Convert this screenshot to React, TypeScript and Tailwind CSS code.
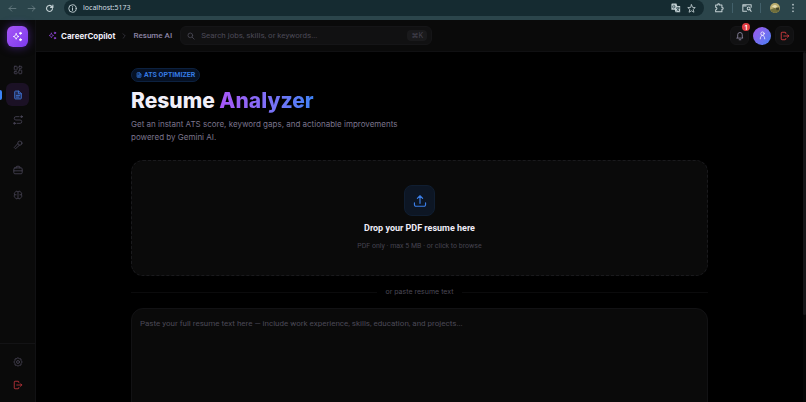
import type { ReactNode } from "react";

function Icon({ size = 10, width = 2, className = "", children }: { size?: number; width?: number; className?: string; children: ReactNode }) {
  return (
    <svg width={size} height={size} viewBox="0 0 24 24" fill="none" stroke="currentColor" strokeWidth={width} strokeLinecap="round" strokeLinejoin="round" className={`shrink-0 ${className}`} aria-hidden="true">
      {children}
    </svg>
  );
}

const sparkles = (
  <>
    <path d="M9 6c1.200 4 2.200 5 6 6-3.800 1-4.800 2-6 6-1.200-4-2.200-5-6-6 3.800-1 4.800-2 6-6Z" />
    <circle cx="18.500" cy="5" r="2" fill="currentColor" />
    <circle cx="18.500" cy="19" r="2" fill="currentColor" />
  </>
);
const logout = (
  <>
    <path d="M14 6V5a2 2 0 0 0-2-2H5a2 2 0 0 0-2 2v14a2 2 0 0 0 2 2h7a2 2 0 0 0 2-2v-1" />
    <path d="M9 12h12M18 9l3 3-3 3" />
  </>
);
const doc = (
  <>
    <path d="M13 2.500H6a2 2 0 0 0-2 2v15a2 2 0 0 0 2 2h12a2 2 0 0 0 2-2v-10z" fill="currentColor" fillOpacity="0.25" />
    <path d="M13 2.500V9h7M8 13h8M8 17h6" />
  </>
);

const nav: { label: string; active?: boolean; icon: ReactNode }[] = [
  {
    label: "Dashboard",
    icon: (
      <>
        <rect x="3" y="3" width="7" height="9" rx="1.500" />
        <rect x="14" y="3" width="7" height="5" rx="1.500" />
        <rect x="14" y="12" width="7" height="9" rx="1.500" />
        <rect x="3" y="16" width="7" height="5" rx="1.500" />
      </>
    ),
  },
  { label: "Resume AI", active: true, icon: doc },
  {
    label: "Roadmap",
    icon: (
      <>
        <circle cx="20.500" cy="4" r="2" fill="currentColor" />
        <circle cx="3.500" cy="20" r="2" fill="currentColor" />
        <path d="M14.500 4H7a4 4 0 0 0 0 8h10a4 4 0 0 1 0 8H9.500" />
      </>
    ),
  },
  {
    label: "Interview",
    icon: (
      <>
        <circle cx="16.500" cy="7.500" r="5" />
        <path d="M11.500 8.500 3 18l3 3 9.500-8.500" />
      </>
    ),
  },
  {
    label: "Jobs",
    icon: (
      <>
        <rect x="2" y="7" width="20" height="14" rx="2.500" />
        <path d="M7.500 7V5a2 2 0 0 1 2-2h5a2 2 0 0 1 2 2v2M2 14h20" />
      </>
    ),
  },
  {
    label: "Skills",
    icon: (
      <>
        <path d="M12 4.500C12 2.500 7 1.500 6 5 3 6 2.500 9 4 11.500 2 14 3 18 6 19c1 3.500 6 2.500 6 .500zM12 4.500c0-2 5-3 6 .500 3 1 3.500 4 2 6.500 2 2.500 1 6.500-2 7.500-1 3.500-6 2.500-6 .500" />
        <path d="M4 11.500h3.500M20 11.500h-3.500" />
      </>
    ),
  },
];

function BrowserBar() {
  return (
    <div className="flex h-5 shrink-0 items-start bg-[#2b454b] text-[#c3d0d3]">
      <div className="flex h-4 w-16 items-center justify-between pl-2 pr-2.5">
        <button aria-label="Back" className="text-[#71868b]"><Icon size={9}><path d="M21 12H3M10 5l-7 7 7 7" /></Icon></button>
        <button aria-label="Forward" className="text-[#71868b]"><Icon size={9}><path d="M3 12h18M14 5l7 7-7 7" /></Icon></button>
        <button aria-label="Reload"><Icon size={9} width={3}><path d="M20 12a8 8 0 1 1-2.500-6L21 9M21 3v6h-6" /></Icon></button>
      </div>
      <div className="flex h-4 flex-1 items-center gap-1.5 rounded-full bg-[#152b31] pl-1 pr-2">
        <button aria-label="Site information"><Icon size={9} width={2.5}><circle cx="12" cy="12" r="10" /><path d="M12 11v6M12 7v1" /></Icon></button>
        <input aria-label="Address" readOnly value="localhost:5173" className="min-w-0 flex-1 bg-transparent font-['Noto_Sans',sans-serif] text-[7px] leading-4 text-[#d3dee0] outline-none" />
        <button aria-label="Translate">
          <Icon size={10} width={2}>
            <path d="M3 1h10l2 6h7v15H11l-2-6H1V3a2 2 0 0 1 2-2Z" fill="#c3d0d3" stroke="none" />
            <path d="M9.500 6.500C8 4 3.500 5 3.500 9s5.500 4.500 6.500 0H7M13 12h7M16.500 10v2M19 12c-1 4-3 6-5 7M14 14l5 5" stroke="#314b52" />
          </Icon>
        </button>
        <button aria-label="Bookmark"><Icon size={9} width={2.2}><path d="m12 2 3 7 7 .5-5.500 4.800L18.500 22 12 18l-6.500 4 2-7.700L2 9.500 9 9z" /></Icon></button>
      </div>
      <div className="flex h-4 w-[102px] shrink-0 items-center justify-between pl-2.5 pr-2">
        <button aria-label="Extensions"><Icon size={10} width={2.5}><path d="M4 5h5V4a2 2 0 0 1 4 0v1h6v6h1a2 2 0 0 1 0 4h-1v6H4v-5a3 3 0 0 0 0-6z" /></Icon></button>
        <span className="h-2.5 w-px bg-[#42606a]" />
        <button aria-label="Side search"><Icon size={10} width={2.5}><path d="M11 20H2V4h20v6M2 7h8" /><circle cx="16" cy="13" r="3.500" /><path d="m19 16 3 4" /></Icon></button>
        <span className="h-2.5 w-px bg-[#42606a]" />
        <button aria-label="Profile" className="h-2.5 w-2.5 overflow-hidden rounded-full">
          <svg width="10" height="10" viewBox="0 0 12 12" className="block" aria-hidden="true">
            <rect width="12" height="12" fill="#b9ac6d" /><path d="M0 8l5-2 7 2v4H0z" fill="#706f3c" /><path d="M2 4l4-2 3 2-3 2z" fill="#e5dcae" /><path d="M7 6l4-1v3l-3 1z" fill="#44452b" />
          </svg>
        </button>
        <button aria-label="Browser menu"><Icon size={10}><g fill="currentColor" stroke="none"><circle cx="12" cy="4" r="2" /><circle cx="12" cy="12" r="2" /><circle cx="12" cy="20" r="2" /></g></Icon></button>
      </div>
    </div>
  );
}

function Sidebar() {
  return (
    <aside className="flex w-9 shrink-0 flex-col border-r border-[#111113] bg-[#0a0a0a]">
      <div className="flex justify-center pt-1.5">
        <a href="#home" aria-label="CareerCopilot home" className="flex h-[21px] w-[21px] items-center justify-center rounded-md bg-linear-to-br from-[#a855f7] to-[#7c3aed] text-white shadow-[0_0_10px_#7c3aed80]">
          <Icon size={11}>{sparkles}</Icon>
        </a>
      </div>
      <nav className="mt-[11px] flex flex-1 flex-col gap-0.5">
        {nav.map((item) => (
          <div key={item.label} className="flex items-center">
            <span className={item.active ? "h-2.5 w-0.5 rounded-r-full bg-[#3b82f6]" : "h-2.5 w-0.5"} />
            <a href={`#${item.label}`} aria-label={item.label} className={item.active ? "ml-1 flex h-[23px] w-[23px] items-center justify-center rounded-md bg-[#1b1125] text-[#4079dc]" : "ml-1 flex h-[23px] w-[23px] items-center justify-center text-[#484556]"}>
              <Icon size={10}>{item.icon}</Icon>
            </a>
          </div>
        ))}
      </nav>
      <div className="flex flex-col items-center border-t border-[#131315] py-1.5">
        <button aria-label="Settings" className="flex h-[23px] items-center text-[#484556]">
          <Icon size={10}><path d="m12 2 3 2 4 .5.500 4L22 12l-2.500 3.500-.5 4-4 .5-3 2-3-2-4-.5-.5-4L2 12l2.500-3.500.5-4L9 4z" /><circle cx="12" cy="12" r="3.500" /></Icon>
        </button>
        <button aria-label="Log out" className="flex h-[23px] items-center text-[#c5363d]"><Icon size={10}>{logout}</Icon></button>
      </div>
    </aside>
  );
}

function Header() {
  return (
    <header className="flex h-8 shrink-0 items-center border-b border-[#101012] bg-[#0a0a0a] px-3">
      <a href="#home" className="flex items-center gap-1 text-[8px] font-bold leading-4 text-[#f0eef8]">
        <Icon size={9} className="text-[#8a43cf]">{sparkles}</Icon>
        CareerCopilot
      </a>
      <Icon size={6} width={2.5} className="mx-1.5 text-[#454350]"><path d="m8 3 9 9-9 9" /></Icon>
      <span className="font-['Roboto',sans-serif] text-[8px] font-medium leading-4 text-[#8d85a6]">Resume AI</span>
      <label className="ml-2 flex h-[19px] w-[252px] items-center gap-1.5 rounded-md border border-[#151517] bg-[#111112] pl-1.5 pr-1 text-[#4b4956]">
        <Icon size={8} width={2.5}><circle cx="10" cy="10" r="7" /><path d="m15.500 15.500 6 6" /></Icon>
        <input aria-label="Search" placeholder="Search jobs, skills, or keywords..." className="min-w-0 flex-1 bg-transparent font-['Roboto',sans-serif] text-[8px] outline-none placeholder:text-[#4b4956]" />
        <kbd className="rounded-sm bg-[#1a1a1c] px-1 font-['Inter','DejaVu_Sans',sans-serif] text-[7px] leading-[11px] text-[#454350]">⌘K</kbd>
      </label>
      <div className="ml-auto flex items-center gap-1">
        <button aria-label="Notifications, 1 unread" className="relative flex h-[19px] w-[19px] items-center justify-center rounded-md border border-[#151517] bg-[#111112] text-[#928ba7]">
          <Icon size={10}><path d="M5 17h14l-1.500-2.500V9a5.500 5.500 0 0 0-11 0v5.500zM10 21h4" /></Icon>
          <span className="absolute -right-0.5 -top-1 flex h-2 w-2 items-center justify-center rounded-full bg-[#e23e42] text-[6px] font-bold text-white">1</span>
        </button>
        <button aria-label="Account" className="flex h-[18px] w-[18px] items-center justify-center rounded-full bg-linear-to-br from-[#9c55ee] to-[#3b7ff3] text-white">
          <Icon size={9}><circle cx="12" cy="7" r="4.500" /><path d="M6 21c0-6 3-9 6-9s6 3 6 9" /></Icon>
        </button>
        <button aria-label="Sign out" className="flex h-[19px] w-[19px] items-center justify-center rounded-md border border-[#151517] bg-[#111112] text-[#e23e42]"><Icon size={10}>{logout}</Icon></button>
      </div>
    </header>
  );
}

export default function App() {
  return (
    <div className="flex h-screen flex-col overflow-hidden bg-black font-['Inter',sans-serif]">
      <BrowserBar />
      <div className="flex min-h-0 flex-1">
        <Sidebar />
        <div className="flex min-w-0 flex-1 flex-col">
          <Header />
          <div className="flex min-h-0 flex-1 justify-between">
            <main className="min-w-0 flex-1 overflow-hidden px-[95px] pt-4">
              <div className="flex">
                <span className="flex h-3.5 items-center gap-0.5 rounded-full border border-[#0c2140] bg-[#061124] px-1 font-['Roboto',sans-serif] text-[7px] font-bold text-[#357be3]">
                  <Icon size={6} width={2.5}>{doc}</Icon>
                  ATS OPTIMIZER
                </span>
              </div>
              <h1 className="mt-1.5 text-[21px] font-extrabold leading-[26px] text-[#f0eef8]">
                Resume <span className="bg-linear-to-r from-[#a855f7] to-[#3b82f6] bg-clip-text text-transparent">Analyzer</span>
              </h1>
              <p className="mt-1 w-[290px] text-[8px] leading-[13px] text-[#7b748c]">Get an instant ATS score, keyword gaps, and actionable improvements powered by Gemini AI.</p>
              <button className="mt-4 flex w-full flex-col items-center rounded-xl border border-dashed border-[#1a1a1d] bg-[#0a0a0a] pb-[23px] pt-6">
                <span className="flex h-[31px] w-[31px] items-center justify-center rounded-lg border border-[#101e31] bg-[#0d1624] text-[#3b7fe8]">
                  <Icon size={14}><path d="M12 16V3M7.500 7.500 12 3l4.500 4.500M2.500 15v3.500A2.500 2.500 0 0 0 5 21h14a2.500 2.500 0 0 0 2.500-2.500V15" /></Icon>
                </span>
                <span className="mt-1.5 font-['Roboto',sans-serif] text-[9px] font-bold leading-3 text-[#eeecf7]">Drop your PDF resume here</span>
                <span className="mt-1.5 font-['Roboto',sans-serif] text-[7px] leading-3 text-[#454350]">PDF only · max 5 MB · or click to browse</span>
              </button>
              <div className="flex h-8 items-center gap-2 text-[7px] text-[#4b4956]">
                <span className="h-px flex-1 bg-[#0b0b0c]" />
                <label htmlFor="resume">or paste resume text</label>
                <span className="h-px flex-1 bg-[#0b0b0c]" />
              </div>
              <textarea id="resume" placeholder="Paste your full resume text here — include work experience, skills, education, and projects..." className="block h-32 w-full resize-none rounded-xl border border-[#121214] bg-[#0a0a0a] p-2 font-['Roboto',sans-serif] text-[8px] leading-[13px] text-[#eeecf7] outline-none placeholder:text-[#4b4956]" />
            </main>
            <div className="w-[3px] shrink-0 bg-[#050505]"><div className="h-3/4 rounded-full bg-[#161618]" /></div>
          </div>
        </div>
      </div>
    </div>
  );
}
